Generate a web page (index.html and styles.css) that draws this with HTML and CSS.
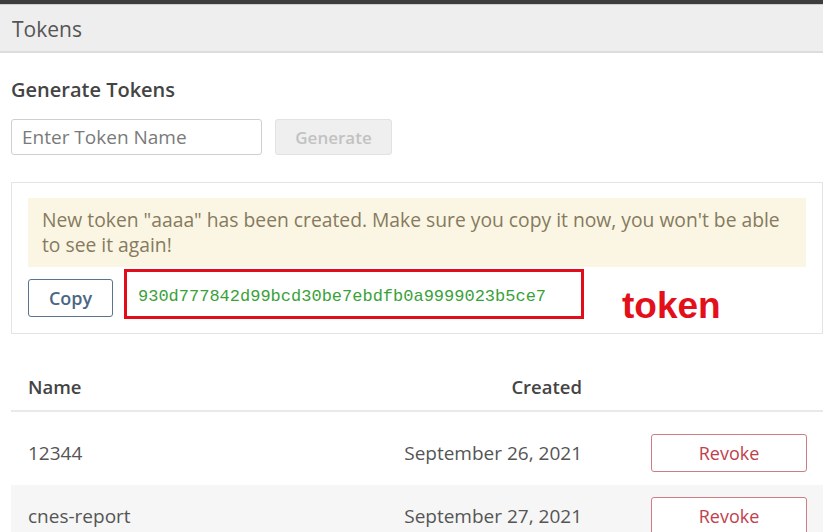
FILE: index.html
```html
<!DOCTYPE html>
<html lang="en">
<head>
<meta charset="utf-8">
<title>Tokens</title>
<link rel="stylesheet" href="styles.css">
</head>
<body>
<div class="topbar"></div>
<header class="page-head"><h1 class="page-title">Tokens</h1></header>
<main class="content">
  <h2 class="section-title">Generate Tokens</h2>
  <div class="gen-row">
    <input class="name-input" type="text" placeholder="Enter Token Name">
    <button class="btn-generate" disabled>Generate</button>
  </div>
  <section class="token-box">
    <div class="alert">New token "aaaa" has been created. Make sure you copy it now, you won't be able to see it again!</div>
    <div class="token-row">
      <button class="btn-copy">Copy</button>
      <div class="token-frame"><code class="token-code">930d777842d99bcd30be7ebdfb0a9999023b5ce7</code></div>
      <span class="token-label">token</span>
    </div>
  </section>
  <div class="table">
    <div class="t-row t-head">
      <div class="c-name">Name</div>
      <div class="c-created">Created</div>
      <div class="c-action"></div>
    </div>
    <div class="t-row first">
      <div class="c-name">12344</div>
      <div class="c-created">September 26, 2021</div>
      <div class="c-action"><button class="btn-revoke">Revoke</button></div>
    </div>
    <div class="t-row alt">
      <div class="c-name">cnes-report</div>
      <div class="c-created">September 27, 2021</div>
      <div class="c-action"><button class="btn-revoke">Revoke</button></div>
    </div>
  </div>
</main>
</body>
</html>
```
FILE: styles.css
```css
* { box-sizing: border-box; }
html, body { margin: 0; padding: 0; background: #fff; overflow: hidden; }
body { font-family: "Open Sans", "Noto Sans", sans-serif; color: #444; width: 823px; height: 532px; }

.topbar { height: 5px; background: #3d3d3d; border-bottom: 1px solid #cfcfcf; }
.page-head { height: 48px; background: #eeeeee; border-bottom: 2px solid #dcdcdc; padding: 2px 0 0 12px; display: flex; align-items: center; }
.page-title { margin: 0; font-size: 21px; font-weight: 400; color: #555; }

.content { padding: 0 0 0 11px; }
.section-title { margin: 0; padding-top: 23px; height: 66px; font-size: 20px; font-weight: 600; color: #444; line-height: 28px; }

.gen-row { display: flex; gap: 13px; height: 36px; }
.name-input { width: 251px; height: 36px; border: 1px solid #cfcfcf; border-radius: 3px; padding: 0 10px; font: inherit; font-size: 19px; color: #555; }
.name-input::placeholder { color: #7a7a7a; }
.btn-generate { width: 117px; height: 36px; background: #efefef; border: 1px solid #e2e2e2; border-radius: 3px; font: inherit; font-size: 17px; font-weight: 600; color: #c2c2c2; }

.token-box { margin-top: 27px; width: 812px; height: 152px; border: 1px solid #e4e4e4; padding: 15px 16px 0 16px; }
.alert { background: #fbf6e3; height: 69px; padding: 9px 14px 0 14px; font-size: 19.3px; line-height: 25px; color: #867a60; }
.token-row { display: flex; align-items: flex-start; margin-top: 2px; height: 52px; }
.btn-copy { margin-top: 10px; width: 85px; height: 38px; background: #fff; border: 1px solid #58748f; border-radius: 3px; font: inherit; font-size: 18px; font-weight: 600; color: #4b6684; }
.token-frame { margin-left: 11px; width: 460px; height: 50px; border: 3px solid #e20d1a; display: flex; align-items: center; padding: 4px 0 0 11px; }
.token-code { font-family: "Liberation Mono", "DejaVu Sans Mono", monospace; font-size: 17px; color: #3aa23a; }
.token-label { margin-left: 38px; margin-top: 18px; line-height: 37px; font-family: "Liberation Sans", Arial, sans-serif; font-weight: 700; font-size: 37px; color: #e3101c; }

.table { margin-top: 18px; width: 812px; }
.t-row { display: grid; grid-template-columns: 1fr 200px 225px; align-items: center; padding: 0 16px 0 17px; font-size: 19px; color: #555; }
.t-head { height: 60px; border-bottom: 2px solid #e9e9e9; font-size: 18.5px; font-weight: 600; color: #444; padding-top: 10px; }
.t-row.first { padding-top: 22px; padding-bottom: 13px; }
.t-row.alt { background: #f6f6f6; padding-top: 12px; padding-bottom: 12px; }
.c-created { text-align: right; }
.c-action { display: flex; justify-content: flex-end; }
.btn-revoke { width: 156px; height: 38px; background: #fff; border: 1px solid #cf7d83; border-radius: 3px; font: inherit; font-size: 18px; font-weight: 400; color: #c0414c; }
```
